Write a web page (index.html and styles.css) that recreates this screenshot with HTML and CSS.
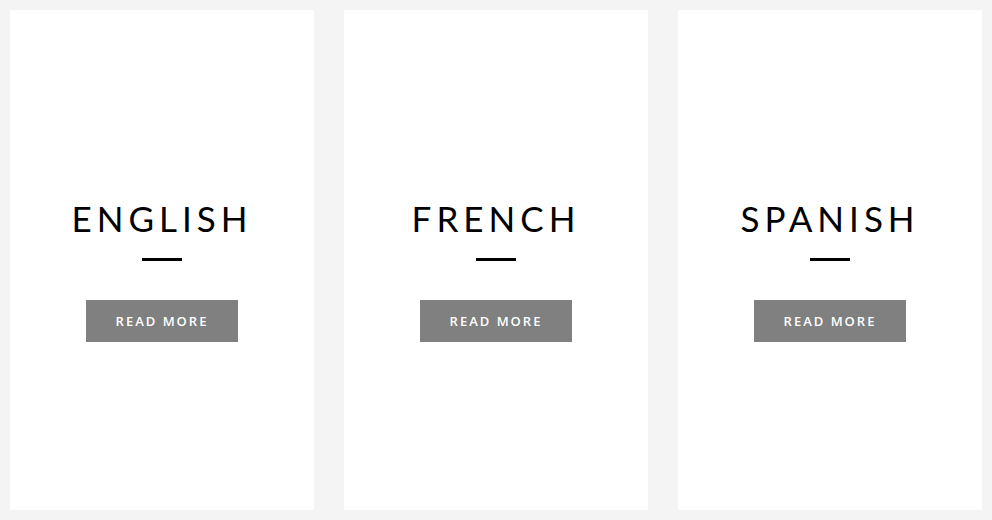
FILE: index.html
```html
<!DOCTYPE html>
<html lang="en">
  <head>
    <meta charset="utf-8" />
    <title>Languages</title>
    <link rel="stylesheet" href="styles.css">
  </head>
  <body>
    <div class="languages">
      <div class="card">
        <h2 class="card-title">ENGLISH</h2>
        <div class="divider"></div>
        <a class="read-more" href="#">READ MORE</a>
      </div>
      <div class="card">
        <h2 class="card-title">FRENCH</h2>
        <div class="divider"></div>
        <a class="read-more" href="#">READ MORE</a>
      </div>
      <div class="card">
        <h2 class="card-title">SPANISH</h2>
        <div class="divider"></div>
        <a class="read-more" href="#">READ MORE</a>
      </div>
    </div>
  </body>
</html>
```

FILE: styles.css
```css
body {
  margin: 0;
  padding: 10px;
  background-color: #f4f4f4;
  font-family: "Open Sans", sans-serif;
}

.languages {
  display: grid;
  grid-template-columns: repeat(3, 304px);
  gap: 30px;
}

.card {
  height: 500px;
  box-sizing: border-box;
  padding-top: 20px;
  background: white;
  display: flex;
  flex-direction: column;
  align-items: center;
  justify-content: center;
}

.card-title {
  margin: 0;
  font-family: "Lato", sans-serif;
  font-weight: 400;
  font-size: 35px;
  line-height: 40px;
  letter-spacing: 5px;
  color: #000;
}

.divider {
  width: 40px;
  height: 3px;
  margin-top: 20px;
  background: #000;
}

.read-more {
  display: block;
  width: 152px;
  height: 42px;
  line-height: 42px;
  margin-top: 39px;
  background: #808080;
  color: white;
  text-align: center;
  text-decoration: none;
  font-size: 13px;
  font-weight: 600;
  letter-spacing: 2px;
}
```
